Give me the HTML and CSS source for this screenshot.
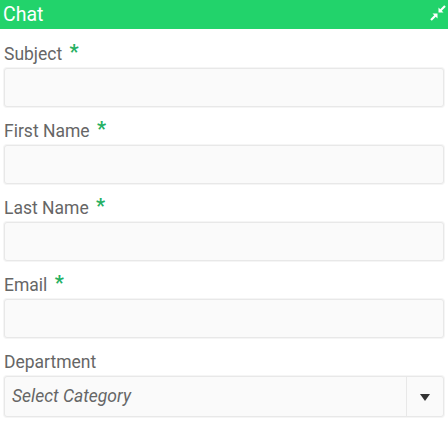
FILE: index.html
```html
<!DOCTYPE html>
<html lang="en">
<head>
  <meta charset="UTF-8">
  <title>Chat</title>
  <link rel="stylesheet" href="styles.css">
</head>
<body>
<div class="header">
  <span class="title">Chat</span>
  <svg class="shrink" width="16" height="16" viewBox="0 0 16 16">
    <line x1="15" y1="1" x2="10.5" y2="5.5" stroke="#fff" stroke-width="2.2"/>
    <polygon points="8.5,2.5 8.5,7.5 13.5,7.5" fill="#fff"/>
    <line x1="1" y1="15" x2="5.5" y2="10.5" stroke="#fff" stroke-width="2.2"/>
    <polygon points="7.5,8.5 7.5,13.5 2.5,8.5" fill="#fff"/>
  </svg>
</div>
<form class="form">
  <div class="field">
    <label>Subject <span class="req">*</span></label>
    <input type="text" class="input">
  </div>
  <div class="field">
    <label>First Name <span class="req">*</span></label>
    <input type="text" class="input">
  </div>
  <div class="field">
    <label>Last Name <span class="req">*</span></label>
    <input type="text" class="input">
  </div>
  <div class="field">
    <label>Email <span class="req">*</span></label>
    <input type="text" class="input">
  </div>
  <div class="field">
    <label>Department</label>
    <div class="select">
      <span class="select-text">Select Category</span>
      <span class="select-arrow"></span>
    </div>
  </div>
</form>
</body>
</html>
```

FILE: styles.css
```css
* {
  margin: 0;
  padding: 0;
  box-sizing: border-box;
}

body {
  font-family: Roboto, "Liberation Sans", sans-serif;
  background: #fff;
  width: 448px;
}

.header {
  height: 29px;
  background-color: #22d36b;
  display: flex;
  align-items: center;
  justify-content: space-between;
  padding: 0 2px 0 3px;
}

.title {
  color: #fff;
  font-size: 19.5px;
  line-height: 29px;
}

.shrink {
  display: block;
  margin-top: -3px;
}

.form {
  padding: 15px 4px 0 4px;
}

.field {
  margin-bottom: 14px;
}

.field label {
  display: block;
  font-size: 17.5px;
  line-height: 20px;
  height: 20px;
  color: #666;
  margin-bottom: 4px;
}

.req {
  color: #25b062;
  font-size: 20px;
  line-height: 0;
  font-weight: bold;
  position: relative;
  top: -1px;
  margin-left: 3px;
}

.input {
  display: block;
  width: 100%;
  height: 39px;
  border: 1px solid #e8e8e8;
  border-radius: 3px;
  background: #fafafa;
  box-shadow: 0 0 0 1px #f5f5f5;
  outline: none;
}

.select {
  display: flex;
  height: 41px;
  border: 1px solid #e8e8e8;
  border-radius: 3px;
  background: #fafafa;
  box-shadow: 0 0 0 1px #f5f5f5;
}

.select-text {
  flex: 1;
  font-style: italic;
  font-size: 17.5px;
  line-height: 39px;
  color: #666;
  padding-left: 7px;
}

.select-arrow {
  width: 37px;
  border-left: 1px solid #e8e8e8;
  display: flex;
  align-items: center;
  justify-content: center;
}

.select-arrow::after {
  content: "";
  border-left: 5px solid transparent;
  border-right: 5px solid transparent;
  border-top: 7px solid #333;
  margin-top: 2px;
}
```
